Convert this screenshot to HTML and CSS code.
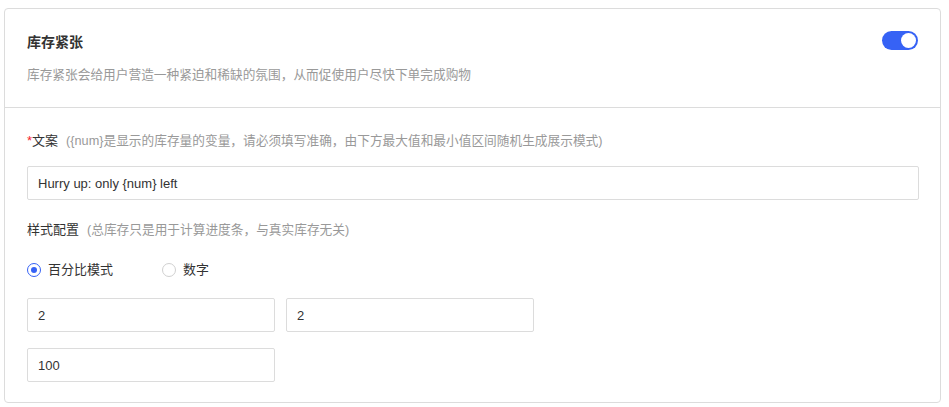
FILE: index.html
```html
<!DOCTYPE html>
<html lang="zh-CN">
<head>
  <meta charset="UTF-8" />
  <meta name="viewport" content="width=device-width, initial-scale=1.0"/>
  <title>库存紧张</title>
  <link rel="stylesheet" href="styles.css">
</head>
<body>

  <div class="card">
    <!-- 头部 -->
    <div class="card-head">
      <div class="head-text">
        <h3>库存紧张</h3>
        <p>库存紧张会给用户营造一种紧迫和稀缺的氛围，从而促使用户尽快下单完成购物</p>
      </div>
      <span class="switch on"><span class="knob"></span></span>
    </div>

    <!-- 表单 -->
    <div class="card-body">
      <div class="field">
        <label><span class="req">*</span>文案<span class="hint">({num}是显示的库存量的变量，请必须填写准确，由下方最大值和最小值区间随机生成展示模式)</span></label>
        <input type="text" class="input full" value="Hurry up: only {num} left">
      </div>

      <div class="field">
        <label>样式配置<span class="hint">(总库存只是用于计算进度条，与真实库存无关)</span></label>
      </div>

      <div class="radios">
        <span class="radio checked"><i></i>百分比模式</span>
        <span class="radio"><i></i>数字</span>
      </div>

      <div class="inputs">
        <input type="text" class="input" value="2">
        <input type="text" class="input" value="2">
        <input type="text" class="input" value="100">
      </div>
    </div>
  </div>

</body>
</html>
```

FILE: styles.css
```css
:root {
  --blue: #3662f5;
  --border: #dcdcdc;
  --text: #333;
  --muted: #999;
}

body {
  font-family: "Liberation Sans", "Noto Sans CJK SC", Arial, sans-serif;
  color: var(--text);
  background: #fff;
  margin: 0;
  padding: 8px 8px 0 4px;
}

.card {
  border: 1px solid var(--border);
  border-radius: 4px;
  height: 395px;
  box-sizing: border-box;
}

/* Header */
.card-head {
  display: flex;
  justify-content: space-between;
  align-items: flex-start;
  padding: 23px 22px 22px 22px;
  border-bottom: 1px solid var(--border);
}

.card-head h3 {
  margin: 0;
  font-size: 14px;
  line-height: 20px;
  font-weight: bold;
}

.card-head p {
  margin: 13px 0 0;
  font-size: 12.7px;
  line-height: 20px;
  color: var(--muted);
}

.switch {
  width: 36px;
  height: 19px;
  border-radius: 10px;
  background: #ccc;
  display: flex;
  align-items: center;
  padding: 0 2px;
  box-sizing: border-box;
  margin-top: -1px;
}

.switch.on {
  background: var(--blue);
  justify-content: flex-end;
}

.switch .knob {
  width: 15px;
  height: 15px;
  border-radius: 50%;
  background: #fff;
}

/* Body */
.card-body {
  padding: 23px 21px 0 22px;
}

.field label {
  display: block;
  font-size: 13px;
  line-height: 20px;
}

.req {
  color: #f5222d;
}

.hint {
  color: var(--muted);
  font-size: 12.7px;
  margin-left: 8px;
}

.input {
  display: block;
  box-sizing: border-box;
  height: 34px;
  border: 1px solid var(--border);
  border-radius: 2px;
  padding: 0 10px;
  font-family: inherit;
  font-size: 13px;
  color: var(--text);
  outline: none;
}

.input.full {
  width: 100%;
  margin: 15px 0 20px;
}

.radios {
  display: flex;
  margin-top: 20px;
  font-size: 13px;
  line-height: 20px;
}

.radio {
  display: flex;
  align-items: center;
  width: 135px;
}

.radio i {
  width: 14px;
  height: 14px;
  border: 1px solid #d0d0d0;
  border-radius: 50%;
  box-sizing: border-box;
  margin-right: 7px;
  display: flex;
  align-items: center;
  justify-content: center;
}

.radio.checked i {
  border-color: var(--blue);
}

.radio.checked i::after {
  content: "";
  width: 6px;
  height: 6px;
  border-radius: 50%;
  background: var(--blue);
}

.inputs {
  display: grid;
  grid-template-columns: 248px 248px;
  column-gap: 11px;
  row-gap: 16px;
  margin-top: 18px;
}
```
